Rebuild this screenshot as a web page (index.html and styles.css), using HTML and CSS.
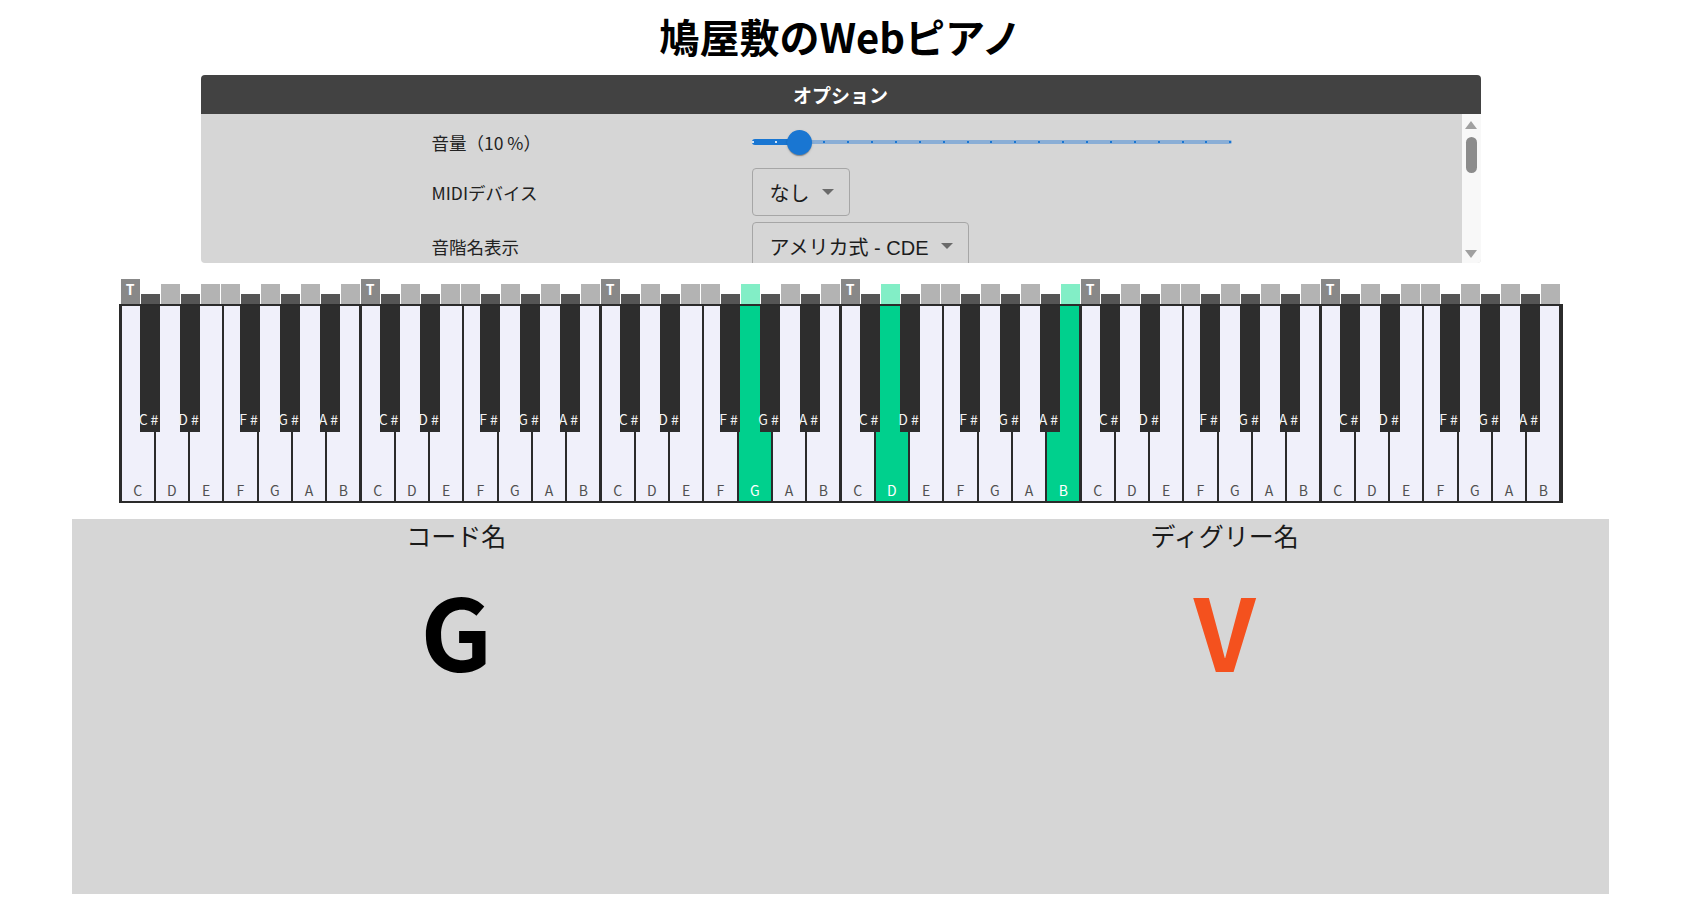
FILE: index.html
```html
<!DOCTYPE html>
<html lang="ja">
<head>
<meta charset="utf-8">
<title>鳩屋敷のWebピアノ</title>
<link rel="stylesheet" href="styles.css">
</head>
<body>
<h1 class="title">鳩屋敷のWebピアノ</h1>

<section class="panel">
  <div class="panel-head">オプション</div>
  <div class="panel-body">
    <div class="opts">
      <div class="opt-label">音量（10 %）</div>
      <div class="opt-ctrl">
        <div class="slider">
          <div class="rail"></div>
          <div class="track" style="width:48px"></div>
          <div class="ticks">
            <i class="tick on"></i><i class="tick on"></i><i class="tick on"></i><i class="tick"></i><i class="tick"></i><i class="tick"></i><i class="tick"></i><i class="tick"></i><i class="tick"></i><i class="tick"></i><i class="tick"></i><i class="tick"></i><i class="tick"></i><i class="tick"></i><i class="tick"></i><i class="tick"></i><i class="tick"></i><i class="tick"></i><i class="tick"></i><i class="tick"></i><i class="tick"></i>
          </div>
          <div class="thumb" style="margin-left:35.5px"></div>
        </div>
      </div>

      <div class="opt-label">MIDIデバイス</div>
      <div class="opt-ctrl">
        <div class="select">なし<span class="caret"></span></div>
      </div>

      <div class="opt-label">音階名表示</div>
      <div class="opt-ctrl">
        <div class="select">アメリカ式 - CDE<span class="caret"></span></div>
      </div>
    </div>
    <div class="sbar">
      <span class="sb-up"></span>
      <span class="sb-thumb"></span>
      <span class="sb-down"></span>
    </div>
  </div>
</section>

<section class="piano">
  <div class="markers">
    <div class="mk-oct"><div class="mk t">T</div><div class="mk b"></div><div class="mk w"></div><div class="mk b"></div><div class="mk w"></div><div class="mk w"></div><div class="mk b"></div><div class="mk w"></div><div class="mk b"></div><div class="mk w"></div><div class="mk b"></div><div class="mk w"></div></div>
    <div class="mk-oct"><div class="mk t">T</div><div class="mk b"></div><div class="mk w"></div><div class="mk b"></div><div class="mk w"></div><div class="mk w"></div><div class="mk b"></div><div class="mk w"></div><div class="mk b"></div><div class="mk w"></div><div class="mk b"></div><div class="mk w"></div></div>
    <div class="mk-oct"><div class="mk t">T</div><div class="mk b"></div><div class="mk w"></div><div class="mk b"></div><div class="mk w"></div><div class="mk w"></div><div class="mk b"></div><div class="mk w on"></div><div class="mk b"></div><div class="mk w"></div><div class="mk b"></div><div class="mk w"></div></div>
    <div class="mk-oct"><div class="mk t">T</div><div class="mk b"></div><div class="mk w on"></div><div class="mk b"></div><div class="mk w"></div><div class="mk w"></div><div class="mk b"></div><div class="mk w"></div><div class="mk b"></div><div class="mk w"></div><div class="mk b"></div><div class="mk w on"></div></div>
    <div class="mk-oct"><div class="mk t">T</div><div class="mk b"></div><div class="mk w"></div><div class="mk b"></div><div class="mk w"></div><div class="mk w"></div><div class="mk b"></div><div class="mk w"></div><div class="mk b"></div><div class="mk w"></div><div class="mk b"></div><div class="mk w"></div></div>
    <div class="mk-oct"><div class="mk t">T</div><div class="mk b"></div><div class="mk w"></div><div class="mk b"></div><div class="mk w"></div><div class="mk w"></div><div class="mk b"></div><div class="mk w"></div><div class="mk b"></div><div class="mk w"></div><div class="mk b"></div><div class="mk w"></div></div>
  </div>

  <div class="keyboard">
    <div class="oct">
      <div class="wk">C</div><div class="wk">D</div><div class="wk">E</div><div class="wk">F</div><div class="wk">G</div><div class="wk">A</div><div class="wk">B</div>
      <div class="bk cs">C#</div><div class="bk ds">D#</div><div class="bk fs">F#</div><div class="bk gs">G#</div><div class="bk as">A#</div>
    </div>
    <div class="oct">
      <div class="wk">C</div><div class="wk">D</div><div class="wk">E</div><div class="wk">F</div><div class="wk">G</div><div class="wk">A</div><div class="wk">B</div>
      <div class="bk cs">C#</div><div class="bk ds">D#</div><div class="bk fs">F#</div><div class="bk gs">G#</div><div class="bk as">A#</div>
    </div>
    <div class="oct">
      <div class="wk">C</div><div class="wk">D</div><div class="wk">E</div><div class="wk">F</div><div class="wk on">G</div><div class="wk">A</div><div class="wk">B</div>
      <div class="bk cs">C#</div><div class="bk ds">D#</div><div class="bk fs">F#</div><div class="bk gs">G#</div><div class="bk as">A#</div>
    </div>
    <div class="oct">
      <div class="wk">C</div><div class="wk on">D</div><div class="wk">E</div><div class="wk">F</div><div class="wk">G</div><div class="wk">A</div><div class="wk on">B</div>
      <div class="bk cs">C#</div><div class="bk ds">D#</div><div class="bk fs">F#</div><div class="bk gs">G#</div><div class="bk as">A#</div>
    </div>
    <div class="oct">
      <div class="wk">C</div><div class="wk">D</div><div class="wk">E</div><div class="wk">F</div><div class="wk">G</div><div class="wk">A</div><div class="wk">B</div>
      <div class="bk cs">C#</div><div class="bk ds">D#</div><div class="bk fs">F#</div><div class="bk gs">G#</div><div class="bk as">A#</div>
    </div>
    <div class="oct">
      <div class="wk">C</div><div class="wk">D</div><div class="wk">E</div><div class="wk">F</div><div class="wk">G</div><div class="wk">A</div><div class="wk">B</div>
      <div class="bk cs">C#</div><div class="bk ds">D#</div><div class="bk fs">F#</div><div class="bk gs">G#</div><div class="bk as">A#</div>
    </div>
  </div>
</section>

<section class="chord">
  <div class="chord-col">
    <div class="chord-label">コード名</div>
    <div class="chord-value">G</div>
  </div>
  <div class="chord-col">
    <div class="chord-label">ディグリー名</div>
    <div class="chord-value degree">V</div>
  </div>
</section>
</body>
</html>
```

FILE: styles.css
```css
* { box-sizing: border-box; }

body {
  margin: 8px;
  background: #ffffff;
  color: #1f1f1f;
  font-family: "Noto Sans CJK JP", "Noto Sans", sans-serif;
}

.title {
  margin: -1px 0 0;
  text-align: center;
  font-size: 40px;
  line-height: 58px;
  font-weight: 700;
  color: #000;
}

/* ---------- options panel ---------- */
.panel {
  width: 1280px;
  margin: 10px auto 0;
  border-radius: 4px;
  overflow: hidden;
}

.panel-head {
  height: 39px;
  background: #424242;
  color: #fff;
  font-weight: 700;
  font-size: 19px;
  line-height: 39px;
  text-align: center;
}

.panel-body {
  height: 149px;
  display: flex;
  background: #d6d6d6;
}

.opts {
  flex: 1;
  overflow: hidden;
  display: grid;
  grid-template-columns: 320px 1fr;
  grid-template-rows: 40px;
  grid-auto-rows: 48px;
  row-gap: 6px;
  padding: 8px 0 0 231px;
  align-items: center;
}

.opt-label {
  font-size: 17.5px;
  color: #222;
}

.opt-ctrl {
  display: flex;
  align-items: center;
}

/* slider */
.slider {
  width: 480px;
  height: 40px;
  display: grid;
  align-items: center;
}
.slider > * { grid-area: 1 / 1; }

.rail {
  height: 4px;
  border-radius: 2px;
  background: #8aaed6;
}
.track {
  height: 6px;
  border-radius: 3px;
  background: #1976d2;
  justify-self: start;
}
.ticks {
  display: flex;
  justify-content: space-between;
  height: 2px;
}
.tick {
  width: 2px;
  height: 2px;
  background: #1976d2;
}
.tick.on { background: rgba(255, 255, 255, 0.8); }
.thumb {
  width: 25px;
  height: 25px;
  border-radius: 50%;
  background: #1976d2;
  justify-self: start;
  box-shadow: 0 2px 1px -1px rgba(0,0,0,.2), 0 1px 1px 0 rgba(0,0,0,.14), 0 1px 3px 0 rgba(0,0,0,.12);
}

/* select */
.select {
  display: inline-flex;
  align-items: center;
  height: 48px;
  padding: 0 15px 0 17px;
  border: 1px solid #a6a6a6;
  border-radius: 4px;
  font-family: "Liberation Sans", "Noto Sans CJK JP", sans-serif;
  font-size: 20px;
  color: #1c1c1c;
  white-space: nowrap;
}
.caret {
  width: 0;
  height: 0;
  margin-left: 12px;
  border-left: 6px solid transparent;
  border-right: 6px solid transparent;
  border-top: 6px solid #6a6a6a;
}

/* fake scrollbar */
.sbar {
  width: 19px;
  flex: none;
  background: #f8f8f8;
  display: flex;
  flex-direction: column;
  align-items: center;
  padding: 7px 0 5px;
}
.sb-up {
  border-left: 6px solid transparent;
  border-right: 6px solid transparent;
  border-bottom: 8px solid #a0a0a0;
}
.sb-thumb {
  width: 11px;
  height: 36px;
  margin-top: 8px;
  border-radius: 6px;
  background: #8c8c8c;
}
.sb-down {
  margin-top: auto;
  border-left: 6px solid transparent;
  border-right: 6px solid transparent;
  border-top: 8px solid #a0a0a0;
}

/* ---------- piano ---------- */
.piano {
  width: 1444px;
  margin: 16px auto 0;
}

.markers {
  display: flex;
  height: 25px;
  padding-left: 2px;
}
.mk-oct {
  display: flex;
  align-items: flex-end;
  width: 240px;
}
.mk {
  width: 19px;
  margin-right: 1px;
  flex: none;
}
.mk.w { height: 20px; background: #b3b3b3; }
.mk.b { height: 10px; background: #555555; }
.mk.t {
  height: 25px;
  background: #888888;
  color: #fff;
  font-size: 14px;
  font-weight: 700;
  line-height: 16px;
  padding-top: 2px;
  text-align: center;
}
.mk.on { background: #82eec6; }

.keyboard {
  display: flex;
  height: 199px;
  border: 2px solid #2b2b2b;
  background: #2b2b2b;
}
.oct {
  position: relative;
  flex: 0 0 240px;
  display: flex;
}
.wk {
  flex: 1;
  margin: 0 1px;
  background: #f0f0fa;
  display: flex;
  align-items: flex-end;
  justify-content: center;
  padding-bottom: 3px;
  font-size: 14px;
  line-height: 16px;
  color: #505050;
}
.wk.on { background: #00d08d; color: #fff; }

.bk {
  position: absolute;
  top: 0;
  width: 20px;
  height: 126px;
  background: #2d2d2d;
  color: #f2f2f2;
  display: flex;
  align-items: flex-end;
  justify-content: center;
  padding-bottom: 5px;
  font-size: 14px;
  line-height: 16px;
  letter-spacing: 3px;
  white-space: nowrap;
}
.cs { left: 19.5px; }
.ds { left: 59.5px; }
.fs { left: 119.5px; }
.gs { left: 159.5px; }
.as { left: 199.5px; }

/* ---------- chord display ---------- */
.chord {
  width: 1537px;
  height: 375px;
  margin: 16px auto 0;
  background: #d6d6d6;
  display: grid;
  grid-template-columns: 1fr 1fr;
  align-content: start;
}
.chord-col {
  display: flex;
  flex-direction: column;
  align-items: center;
}
.chord-label {
  margin-top: -2px;
  font-size: 25px;
  line-height: 36px;
  color: #1a1a1a;
}
.chord-value {
  margin-top: 26px;
  font-size: 100px;
  line-height: 100px;
  font-weight: 700;
  color: #000;
}
.chord-value.degree { color: #f4511e; }
```
